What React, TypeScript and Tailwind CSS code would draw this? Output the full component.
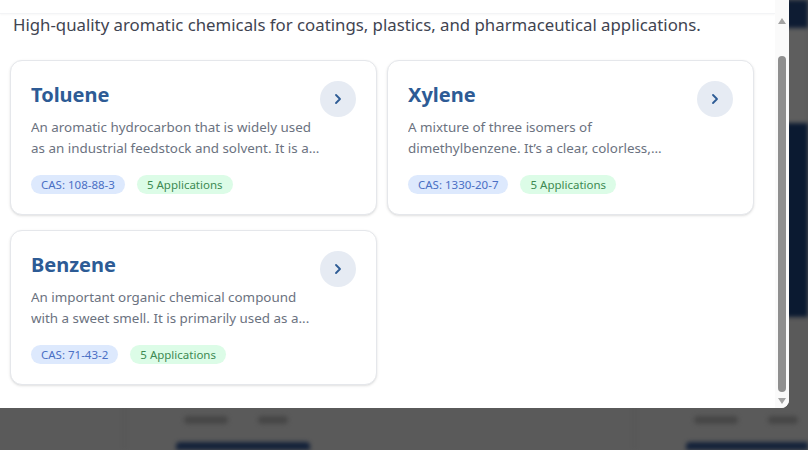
import { useEffect, useRef } from 'react'
import { ChevronRight } from 'lucide-react'

type Chemical = {
  name: string
  description: string
  cas: string
  applications: number
}

const chemicals: Chemical[] = [
  {
    name: 'Toluene',
    description: 'An aromatic hydrocarbon that is widely used as an industrial feedstock and solvent. It is a...',
    cas: '108-88-3',
    applications: 5,
  },
  {
    name: 'Xylene',
    description: 'A mixture of three isomers of dimethylbenzene. It\u2019s a clear, colorless,...',
    cas: '1330-20-7',
    applications: 5,
  },
  {
    name: 'Benzene',
    description: 'An important organic chemical compound with a sweet smell. It is primarily used as a...',
    cas: '71-43-2',
    applications: 5,
  },
]

const ChemicalCard = ({ chemical }: { chemical: Chemical }) => (
  <div className="flex items-start justify-between rounded-xl border border-gray-200 bg-white p-5 shadow-sm">
    <div className="w-[289px]">
      <h3 className="text-[20px] font-bold leading-[28px] text-[#2d5b95]">{chemical.name}</h3>
      <p className="mt-2 line-clamp-2 text-[13.4px] leading-[21px] text-[#6b7280]">{chemical.description}</p>
      <div className="mt-4 flex gap-3">
        <span className="flex h-[19px] items-center rounded-full bg-[#dde9fd] px-2.5 text-[11.5px] text-[#4a6fc4]">
          CAS: {chemical.cas}
        </span>
        <span className="flex h-[19px] items-center rounded-full bg-[#dcfce7] px-2.5 text-[11.5px] text-[#3d8a52]">
          {chemical.applications} Applications
        </span>
      </div>
    </div>
    <button className="flex h-9 w-9 shrink-0 items-center justify-center rounded-full bg-[#e6ebf3] text-[#2d5b95]">
      <ChevronRight size={16} strokeWidth={2.75} />
    </button>
  </div>
)

const BackdropCard = () => (
  <div className="border-l border-[#535353] pl-[51px] pt-[99px]">
    <div className="ml-2 flex gap-[30px]">
      <div className="h-[8px] w-[44px] rounded bg-[#474747]" />
      <div className="h-[8px] w-[30px] rounded bg-[#474747]" />
    </div>
    <div className="mt-[18px] h-[30px] w-[134px] rounded bg-[#14223a]" />
  </div>
)

const Scrollbar = () => (
  <div className="flex w-[14px] shrink-0 flex-col items-center bg-[#fafafa] pb-[4px] pt-[18px]">
    <div className="h-0 w-0 border-x-[4px] border-b-[6px] border-x-transparent border-b-[#a3a3a3]" />
    <div className="mt-[32px] w-[8px] flex-1 rounded-full bg-[#8f8f8f]" />
    <div className="mt-[6px] h-0 w-0 border-x-[4px] border-t-[6px] border-x-transparent border-t-[#a3a3a3]" />
  </div>
)

export default function App() {
  const scrollRef = useRef<HTMLDivElement>(null)

  useEffect(() => {
    if (scrollRef.current) scrollRef.current.scrollTop = 51
  }, [])

  return (
    <div className="relative h-[450px] w-[808px] overflow-hidden bg-[#5a5a5a] font-['Noto_Sans',sans-serif]">
      {/* page behind the overlay */}
      <div className="flex h-full flex-col blur-[2px]">
        <div className="h-[28px] shrink-0 bg-[#0e1c33]" />
        <div className="h-[95px] shrink-0 bg-[#5e5e5e]" />
        <div className="h-[194px] shrink-0 bg-[#0b1a31]" />
        <div className="grid min-h-0 flex-1 grid-cols-[500px_1fr] gap-[10px] overflow-hidden pl-[124px]">
          <BackdropCard />
          <BackdropCard />
        </div>
      </div>

      {/* modal */}
      <div className="absolute left-0 top-0 flex h-[408px] w-[789px] overflow-hidden rounded-br-lg bg-white">
        <div ref={scrollRef} className="h-full flex-1 overflow-hidden">
          <div className="border-b border-gray-100 shadow-[0_1px_2px_rgba(0,0,0,0.03)]">
            <div className="mx-auto mb-[13px] mt-[15px] h-[36px] w-[314px] rounded-lg border border-gray-200 bg-gray-50" />
          </div>
          <p className="px-[13px] text-[16.8px] leading-[22px] text-[#3f4451]">
            High-quality aromatic chemicals for coatings, plastics, and pharmaceutical applications.
          </p>
          <div className="ml-[10px] mt-[24px] grid w-[744px] grid-cols-2 gap-x-[10px] gap-y-[15px] pb-[27px]">
            {chemicals.map((c) => (
              <ChemicalCard key={c.name} chemical={c} />
            ))}
          </div>
        </div>
        <Scrollbar />
      </div>
    </div>
  )
}
